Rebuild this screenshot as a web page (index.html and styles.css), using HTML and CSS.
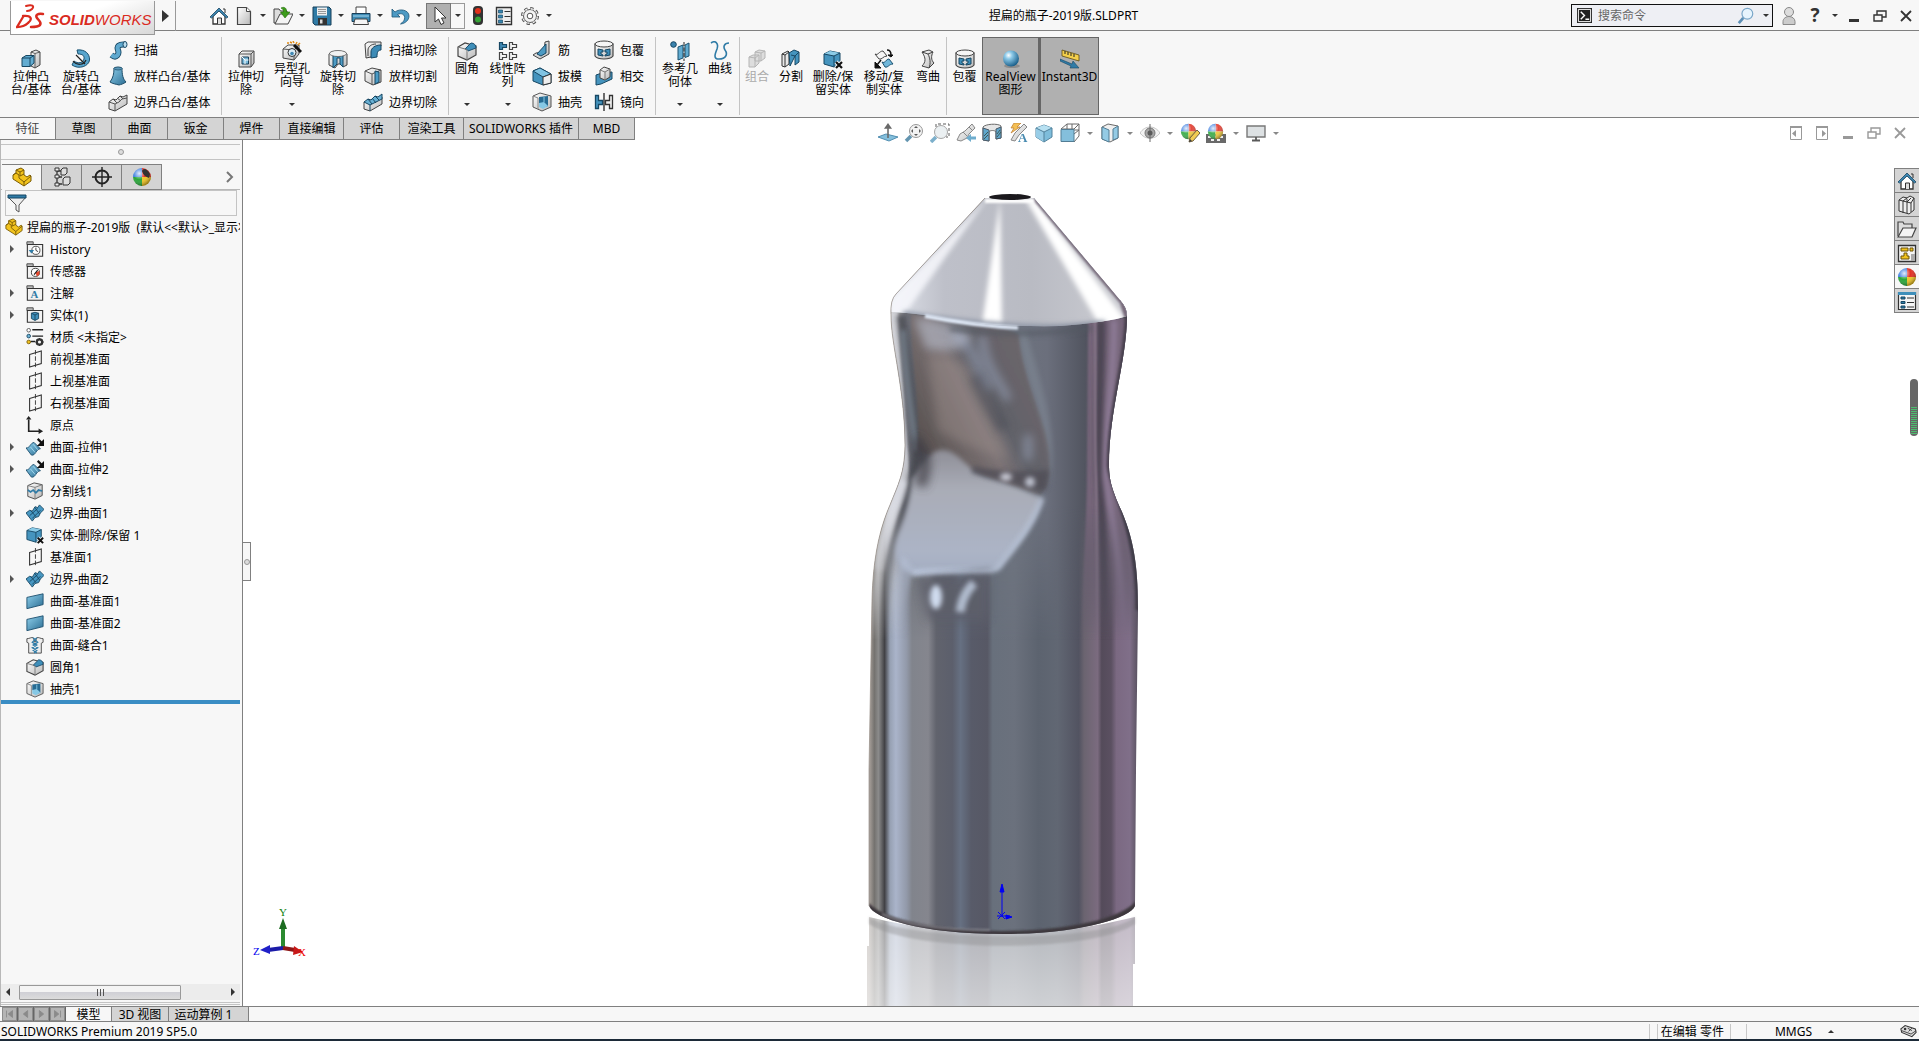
FILE: index.html
```html
<!DOCTYPE html>
<html lang="zh-CN">
<head>
<meta charset="utf-8">
<title>捏扁的瓶子-2019版.SLDPRT</title>
<link rel="stylesheet" href="styles.css">
</head>
<body>
<svg class="sprite" aria-hidden="true">
  <defs>
    <linearGradient id="gb" x1="0" y1="0" x2="1" y2="1"><stop offset="0" stop-color="#8fd0ec"/><stop offset="1" stop-color="#2b6d93"/></linearGradient>
    <linearGradient id="gg" x1="0" y1="0" x2="1" y2="1"><stop offset="0" stop-color="#ffffff"/><stop offset="1" stop-color="#b8b8b8"/></linearGradient>
    <radialGradient id="gs" cx=".35" cy=".3" r=".75"><stop offset="0" stop-color="#fff"/><stop offset=".3" stop-color="#8cc9e8"/><stop offset="1" stop-color="#145a86"/></radialGradient>
    <radialGradient id="gw" cx=".35" cy=".3" r=".7"><stop offset="0" stop-color="#fff" stop-opacity=".85"/><stop offset=".5" stop-color="#fff" stop-opacity="0"/><stop offset="1" stop-color="#000" stop-opacity=".35"/></radialGradient>
  </defs>
  <symbol id="home" viewBox="0 0 20 20"><path d="M4 10v8h12v-8L10 4z" fill="#fff" stroke="#333" stroke-width="1.3"/><path d="M8.500 18v-6h4v6" fill="#ddd" stroke="#333"/><path d="M14 3h2v4" stroke="#333" fill="none"/><path d="M1 11l9-9 9 9-1.500 1L10 5l-7.500 7z" fill="#3f88b3" stroke="#174460" stroke-width=".8"/></symbol>
  <symbol id="new" viewBox="0 0 20 20"><path d="M3.500 1.500h9l4 4v13h-13z" fill="url(#gg)" stroke="#444" stroke-width="1.200"/><path d="M12.500 1.500v4h4" fill="#fff" stroke="#444"/></symbol>
  <symbol id="open" viewBox="0 0 20 20"><path d="M1 17V3h5l1.500 2H14v12z" fill="#ddd" stroke="#444"/><path d="M2 18l5-10h13l-5 10z" fill="#f4f4f4" stroke="#444"/><path d="M8 2c4-2 6 1 5.500 4H17l-5 6-4.500-6h3C10.500 4 10 3 8 2z" fill="#3d9c1b" stroke="#246c0c" stroke-width=".6"/></symbol>
  <symbol id="save" viewBox="0 0 20 20"><path d="M1 1h16l2 2v16H3l-2-2z" fill="#2f7ba6" stroke="#173f59"/><path d="M5 1.500h10v8H5z" fill="#eee"/><path d="M6 3.500h8M6 5.500h8M6 7.500h8" stroke="#999"/><path d="M6 12h9v7H6z" fill="#333"/><path d="M8 13.500h2.500v4H8z" fill="#ddd"/></symbol>
  <symbol id="print" viewBox="0 0 20 20"><path d="M5 8V1h10v7" fill="#fff" stroke="#444"/><path d="M1 7.500h18v8H1z" fill="#3d8ab4" stroke="#183f59"/><path d="M2 10h16" stroke="#a8d8ee"/><path d="M4 13h12l1.500 5.500h-15z" fill="#f5f5f5" stroke="#444"/></symbol>
  <symbol id="undo" viewBox="0 0 20 20"><path d="M2 3v8h8L7.500 8.500c4-2 8 0 7 4.500-.5 2-2 3.500-4 5 5-.5 8.500-4 8.500-8C19 4 10 2 5 6z" fill="#4d9ac4" stroke="#1d5577" stroke-width=".8"/></symbol>
  <symbol id="cursor" viewBox="0 0 20 20"><path d="M6 1v15l3.500-3 2.500 5.500 3-1.500-2.500-5H17z" fill="#fff" stroke="#333"/></symbol>
  <symbol id="traffic" viewBox="0 0 20 20"><rect x="5" y="0" width="10" height="19" rx="4" fill="#333"/><circle cx="10" cy="5" r="3" fill="#e2301b"/><circle cx="10" cy="13.500" r="3" fill="#35a336"/></symbol>
  <symbol id="options" viewBox="0 0 20 20"><path d="M2.500 1.500h15v17h-15z" fill="#eee" stroke="#333" stroke-width="1.400"/><path d="M4.500 4h4v3h-4zM4.500 9h4v3h-4zM4.500 14h4v3h-4z" fill="#3986b0" stroke="#1b4d6b" stroke-width=".7"/><path d="M10.500 5.500h6M10.500 10.500h6M10.500 15.500h6" stroke="#333" stroke-width="1.200"/></symbol>
  <symbol id="gear" viewBox="0 0 20 20"><g fill="none"><circle cx="10" cy="10" r="7.500" stroke="#555" stroke-width="3" stroke-dasharray="3.200 2.690"/><circle cx="10" cy="10" r="6.500" fill="#f3f3f3" stroke="#555"/><circle cx="10" cy="10" r="7.300" stroke="#f3f3f3" stroke-width="1.400" stroke-dasharray="2.200 3.530" stroke-dashoffset="-.5"/></g><circle cx="10" cy="10" r="2.800" fill="#fff" stroke="#555"/></symbol>
  <symbol id="extrude" viewBox="0 0 20 20"><path d="M10 3l5-2 4 2v13l-5 3-4-2z" fill="url(#gg)" stroke="#444"/><path d="M14 4.500v14M10 3l4 1.500L19 3" fill="none" stroke="#444" stroke-width=".8"/><path d="M1 9l4-2.500h8V14l-4 3.500H1z" fill="#62acd1" stroke="#174763"/><path d="M1 9h8v8.500M9 9l4-2.500" fill="none" stroke="#174763"/></symbol>
  <symbol id="revolve" viewBox="0 0 20 20"><path d="M6 1c8-1 13 4 12.500 10C18 17 8 21 1 16l2-4c4 3 9 2 10-2 .5-3-1-5-6-5z" fill="#58a5cd" stroke="#1b516f"/><path d="M5 6l9 9M2 12c4 5 11 4 13-1" stroke="#222" fill="none" stroke-width="1.200"/></symbol>
  <symbol id="sweep" viewBox="0 0 20 20"><path d="M3.500 15c5 4 8-1 6.500-5S11 4 17 4.500" fill="none" stroke="#174763" stroke-width="6"/><path d="M3.500 15c5 4 8-1 6.500-5S11 4 17 4.500" fill="none" stroke="#5fa9cf" stroke-width="4.200"/><ellipse cx="17" cy="4.500" rx="2" ry="3" fill="#b9def0" stroke="#174763"/></symbol>
  <symbol id="loft" viewBox="0 0 20 20"><path d="M6 2c2-1 6-1 8 0 0 7 1 11 4 14-3 2-5 2.500-7 3-3-1-6-1-9-3 3-4 4-8 4-14z" fill="url(#gb)" stroke="#1e4d69"/><ellipse cx="10" cy="2.500" rx="4" ry="1.500" fill="#5d98b8" stroke="#1e4d69" stroke-width=".7"/></symbol>
  <symbol id="boundary" viewBox="0 0 20 20"><path d="M1 10l4-3 3 1 4-4 3 1 4-2v9l-12 7-6-2z" fill="url(#gg)" stroke="#444"/><path d="M1 10l6 2 4-2 3-3 5-1M7 12v7M5 7l4 4M9 6l4 3M12 4l3 3" fill="none" stroke="#555"/></symbol>
  <symbol id="boundaryb" viewBox="0 0 20 20"><path d="M1 10v7l6 2 12-7V5z" fill="url(#gg)" stroke="#444"/><path d="M1 10l4-3 3 1 4-4 3 1 4-3v5L7 13z" fill="#67b0d4" stroke="#174763"/><path d="M7 13v6M5 7l4 5M9 6l4 5M12 4l4 4" fill="none" stroke="#174763"/></symbol>
  <symbol id="cut" viewBox="0 0 20 20"><path d="M3 5l3-3h12v12l-3 4H3z" fill="url(#gg)" stroke="#444"/><path d="M3 5h12v13M15 5l3-3" fill="none" stroke="#555"/><path d="M6 8h6.500v7H6z" fill="#78b9da" stroke="#183f59"/><path d="M6 8l3 3v4M9 11h3.500" fill="none" stroke="#fff"/></symbol>
  <symbol id="wizard" viewBox="0 0 20 20"><path d="M1 8l5-4h11v9l-5 6-11-2z" fill="url(#gg)" stroke="#444"/><path d="M1 8l11 1v10M12 9l5-5" fill="none" stroke="#555"/><circle cx="10" cy="11.500" r="4" fill="#dcecf5" stroke="#333"/><circle cx="10" cy="12.500" r="1.800" fill="#3f88b3"/><path d="M12 4l7 7" stroke="#111" stroke-width="3"/><path d="M5 2h2M8 1l2 1M11 0l1 2M15 1l-1 2M18 2l-2 2" stroke="#e08b17" stroke-width="1.500"/></symbol>
  <symbol id="revcut" viewBox="0 0 20 20"><path d="M1 5c2-4 16-4 18 0v11l-4 2-3-3-2 0-3 4-6-3z" fill="url(#gg)" stroke="#444"/><path d="M5 6l5 2 5-2v12l-3-3V9h-3v6l-4 4z" fill="#4e9cc5" stroke="#174763"/><ellipse cx="10" cy="4.500" rx="8.500" ry="3" fill="#f2f2f2" stroke="#555" stroke-width=".7"/></symbol>
  <symbol id="sweepcut" viewBox="0 0 20 20"><path d="M2 4l3-2h13v4L8 17l-5 1z" fill="url(#gg)" stroke="#444"/><path d="M8 18V12c0-4 4-7 10-7v5c-3 0-4 2-4 7z" fill="#3d8bb6" stroke="#174763"/><path d="M5 16V10c0-3 3-6 8-6" fill="none" stroke="#444"/></symbol>
  <symbol id="loftcut" viewBox="0 0 20 20"><path d="M2 5l7-3 9 2v12l-8 3-8-4z" fill="url(#gg)" stroke="#444"/><path d="M2 5l7 3v11M9 8l9-4" fill="none" stroke="#555"/><path d="M12 5l4 1v10l-4 2z" fill="#4b9bc5" stroke="#174763"/></symbol>
  <symbol id="fillet" viewBox="0 0 20 20"><path d="M1 6l7-4 11 3v9l-9 5-9-4z" fill="url(#gg)" stroke="#444" stroke-width="1.200"/><path d="M8 8l6-6c3 0 5 2 5 5l-8 3c0-1-1-2-3-2z" fill="#3f8fba" stroke="#1d4f6e"/><path d="M1 6l7 2c2 0 2 2 2 4v7" fill="none" stroke="#777"/></symbol>
  <symbol id="pattern" viewBox="0 0 20 20"><g stroke-width="1.200"><path d="M1.500 1.500h3v2h4v3h-4v2h-3z" fill="#3f88b3" stroke="#174763"/><path d="M11.500 1.500h3v2h4v3h-4v2h-3zM1.500 11.500h3v2h4v3h-4v2h-3zM11.500 11.500h3v2h4v3h-4v2h-3z" fill="#f4f4f4" stroke="#444"/></g></symbol>
  <symbol id="rib" viewBox="0 0 20 20"><path d="M13 2l4-1v13l-9 5-7-4 3-2 8-1z" fill="url(#gg)" stroke="#444"/><path d="M5 14l9-10v9l-5 3z" fill="#4c9ac3" stroke="#174763"/></symbol>
  <symbol id="draft" viewBox="0 0 20 20"><path d="M1 5l7-3 11 6v9l-8 2-10-4z" fill="#4594be" stroke="#174763"/><path d="M1 5l10 6 8-3-11-6z" fill="#80c3e2" stroke="#174763"/><path d="M11 11l8-3v9l-8 2z" fill="#eee" stroke="#333"/></symbol>
  <symbol id="shell" viewBox="0 0 20 20"><path d="M1 4l7-3 11 3v11l-9 4-9-4z" fill="url(#gg)" stroke="#555"/><path d="M7 5l9-1v10l-2 1-7-4z" fill="#276b92"/><path d="M7 11l5-1 4 4-5 3-4-2z" fill="#86c8e5"/><path d="M12 5v5" stroke="#86c8e5"/><path d="M1 4l5 2v11" fill="none" stroke="#888"/></symbol>
  <symbol id="wrap" viewBox="0 0 20 20"><path d="M1 4v12c3 4 15 4 18 0V4z" fill="url(#gg)" stroke="#444" stroke-width="1.200"/><ellipse cx="10" cy="4" rx="9" ry="3" fill="#f6f6f6" stroke="#444"/><path d="M4 9l5 1v2H7v2l2 1v1l-5-1zM16 9l-5 1v2h2v2l-2 1v1l5-1z" fill="#3f8fba" stroke="#174763"/></symbol>
  <symbol id="intersect" viewBox="0 0 20 20"><path d="M2 9l6-2 10-1v7l-11 5-5 1z" fill="#4594be" stroke="#174763"/><path d="M6 4l4-3 6 2v8l-5 3-5-2z" fill="url(#gg)" stroke="#444"/><path d="M6 4l5 2v8M11 6l5-3" fill="none" stroke="#777"/></symbol>
  <symbol id="mirror" viewBox="0 0 20 20"><path d="M1.500 3.500h3v5h4v4h-4v4h-3z" fill="#4594be" stroke="#174763" stroke-width="1.300"/><path d="M18.500 3.500h-3v5h-4v4h4v4h3z" fill="#eee" stroke="#333" stroke-width="1.300"/><path d="M10 1v18" stroke="#222" stroke-width="1.300"/></symbol>
  <symbol id="refgeo" viewBox="0 0 20 20"><circle cx="3.500" cy="3.500" r="2.800" fill="#3a82ad" stroke="#174763"/><path d="M8 6l5-2v13l-5 2zM15 4l4-2v13l-4 1.500z" fill="#62acd1" stroke="#1b516f"/><path d="M14 1v19" stroke="#222" stroke-dasharray="4 1.500"/></symbol>
  <symbol id="curve" viewBox="0 0 20 20"><path d="M1 2c4-3 8 0 6 6-2 5-4 10 2 10 7 0 9-5 6-9-2-3-1-7 4-7" fill="none" stroke="#2f7ba6" stroke-width="1.600"/></symbol>
  <symbol id="combine" viewBox="0 0 20 20"><path d="M8 3l4-2 6 1v7l-4 3H8zM2 8l4-2h6v8l-4 4H2z" fill="#ddd" stroke="#b5b5b5"/><path d="M2 8l6 1v9M8 9l4-3M8 3l6 1v8M14 4l4-2" fill="none" stroke="#b5b5b5"/></symbol>
  <symbol id="split" viewBox="0 0 20 20"><path d="M1 5l6-3 1 1v12l-4 3-3-1zM4 6v12M1 5l3 1 4-3" fill="#e8e8e8" stroke="#333"/><path d="M8 4l5-3 5 2v10l-4 3V7L9 17z" fill="#4594be" stroke="#174763"/><path d="M10 6l4 1 4-4" fill="none" stroke="#174763"/></symbol>
  <symbol id="delbody" viewBox="0 0 20 20"><path d="M1 5l6-3 10 2v11l-6 3-10-3z" fill="#4594be" stroke="#174763"/><path d="M1 5l6-3 10 2-6 3z" fill="#8bcbe7"/><path d="M11 7v11M1 5l10 2 6-3" fill="none" stroke="#174763"/><path d="M13 13l6 6M19 13l-6 6" stroke="#f7f7f7" stroke-width="4"/><path d="M13 13l6 6M19 13l-6 6" stroke="#111" stroke-width="2.200"/></symbol>
  <symbol id="move" viewBox="0 0 20 20"><path d="M1 5c3 2 4-3 8-3l4 5c-4 0-5 4-8 3z" fill="#f5f5f5" stroke="#444"/><path d="M8 13c3 2 4-3 7-3l4 5c-4 0-5 4-8 3z" fill="#6fb6d9" stroke="#1b516f"/><path d="M13 1c3 0 4 2 4 5" fill="none" stroke="#111" stroke-width="1.500"/><path d="M14 6h5l-2 2zM1 13v6h6z" fill="#111" stroke="#111"/><path d="M7 11l-4 5" stroke="#111" stroke-width="1.500"/></symbol>
  <symbol id="flex" viewBox="0 0 20 20"><path d="M4 3l7-2 4 2c-2 4-2 8 1 11l-5 5-7-2c4-4 4-8 0-14z" fill="url(#gg)" stroke="#444"/><path d="M4 3l6 2c2 4 3 9 1 14M10 5l5-2" fill="none" stroke="#444"/></symbol>
  <symbol id="realview" viewBox="0 0 20 20"><ellipse cx="11" cy="17" rx="8" ry="2" fill="#8c8c8c"/><circle cx="10" cy="9.500" r="8" fill="url(#gs)"/></symbol>
  <symbol id="instant" viewBox="0 0 20 20"><path d="M2 1l17 5v6L2 7z" fill="#f3cf4b" stroke="#5a4a12" stroke-width=".8"/><path d="M5 2v3M8 3v3M11 4v3M14 5v3" stroke="#222"/><path d="M0 10l12 5 1-3 6 7-9 0 1-2L0 12z" fill="#2f7ba6" stroke="#174763" stroke-width=".6"/></symbol>
  <symbol id="normal" viewBox="0 0 20 20"><path d="M0 14l8-3 12 3-9 4z" fill="#74b7d8" stroke="#3a7fa6"/><path d="M10 15V3M7.500 5L10 1.500 12.500 5z" stroke="#555" stroke-width="1.600" fill="#555"/></symbol>
  <symbol id="zoomfit" viewBox="0 0 20 20"><path d="M2 18l5-5" stroke="#4f87a6" stroke-width="3.500"/><circle cx="12" cy="8" r="6.500" fill="#f2f2f2" stroke="#888"/><path d="M12 3l2 2h-4zM12 13l2-2h-4zM7 8l2-2v4zM17 8l-2-2v4z" fill="#444"/></symbol>
  <symbol id="zoomarea" viewBox="0 0 20 20"><path d="M6 4V1h13v13h-3" fill="none" stroke="#444" stroke-dasharray="3 2"/><path d="M1 19l5-5" stroke="#6aa5c4" stroke-width="3.500"/><circle cx="11" cy="9" r="6.500" fill="#e9eef1" stroke="#999"/></symbol>
  <symbol id="prev" viewBox="0 0 20 20"><path d="M1 17l3-6 5-3 7-7 3 4-6 6-2 4-6 3z" fill="url(#gg)" stroke="#777"/><path d="M7 9l4 4M13 4l3 3" stroke="#777"/><path d="M10 15l5-4v2.500h5v3h-5V19z" fill="#5ba2c8"/></symbol>
  <symbol id="section" viewBox="0 0 20 20"><path d="M1 4c2-3 15-4 18-1v12l-5 1V9c-1-2-6-2-7 0v9l-6-1z" fill="#e3e3e3" stroke="#555"/><path d="M1 5l6 2v11l-6-1zM14 6l5-2v11l-5 1z" fill="#4b9bc5" stroke="#345"/><path d="M2 13l4-4M2 16l4-4M15 11l3-4M15 14l4-5" stroke="#244"/></symbol>
  <symbol id="dynview" viewBox="0 0 20 20"><path d="M3 17l4-7 9-9 3 3-8 8-4 6z" fill="url(#gg)" stroke="#777"/><path d="M6 0h7L9 4h3L3 10l3-5H3z" fill="#f3b73d" stroke="#b26a15" stroke-width=".7"/></symbol>
  <symbol id="cube" viewBox="0 0 20 20"><path d="M2 5l8-3 8 3v9l-8 5-8-5z" fill="#6db4d7" stroke="#3b718e"/><path d="M2 5l8 4v10l-8-5z" fill="#8ac7e4"/><path d="M2 5l8-3 8 3-8 4z" fill="#aedcf0"/><path d="M2 5l8 4 8-4M10 9v10" fill="none" stroke="#3b718e"/></symbol>
  <symbol id="orient" viewBox="0 0 20 20"><path d="M1 6l6-5h12v12l-5 6M7 1v8M12 1v8M1 6h13M14 6l5-5M19 7h-9M14 11l5-4" fill="none" stroke="#555"/><path d="M1 6.500h13v12H1z" fill="#74b7d8" stroke="#3b6c87"/></symbol>
  <symbol id="display" viewBox="0 0 20 20"><path d="M2 4l6-3 10 2v12l-8 4-8-3z" fill="#eee" stroke="#555"/><path d="M2 4l7 3v12l-7-3z" fill="#86c4e2" stroke="#3b6c87"/><path d="M13 6l5-3v12l-5 2z" fill="#86c4e2" stroke="#3b6c87"/></symbol>
  <symbol id="eye" viewBox="0 0 20 20"><path d="M0 10c5-8 15-8 20 0-5 7-15 7-20 0z" fill="#f2f2f2" stroke="#bbb"/><circle cx="10" cy="10" r="5" fill="#999" stroke="#666"/><path d="M10 1v18" stroke="#555"/><circle cx="10" cy="10" r="2.500" fill="#444"/></symbol>
  <symbol id="ball" viewBox="0 0 20 20"><path d="M10 10V1a9 9 0 0 1 9 9z" fill="#e23124"/><path d="M10 10H1a9 9 0 0 1 9-9z" fill="#3c7de0"/><path d="M10 10v9a9 9 0 0 1-9-9z" fill="#2aa63a"/><path d="M10 10h9a9 9 0 0 1-9 9z" fill="#f0c526"/><circle cx="10" cy="10" r="9" fill="url(#gw)"/></symbol>
  <symbol id="ballpen" viewBox="0 0 20 20"><use href="#ball" width="17" height="17"/><path d="M9 19l1-4 7-8 3 3-7 8z" fill="#f0c43c" stroke="#5b4a2a"/><path d="M9 19l1-3 2 2z" fill="#222"/></symbol>
  <symbol id="scene" viewBox="0 0 20 20"><path d="M0 11h20v9H0z" fill="#555"/><path d="M2 13h3v2H2zM8 13h3v2H8zM14 13h3v2h-3zM5 16h3v2H5zM11 16h3v2h-3z" fill="#eee"/><use href="#ball" x="1" width="17" height="17"/></symbol>
  <symbol id="monitor" viewBox="0 0 20 20"><path d="M1 3h18v11H1z" fill="#d9dde0" stroke="#666" stroke-width="1.400"/><path d="M10 14v3M6 17.500h8" stroke="#444" stroke-width="1.800"/></symbol>
  <symbol id="part" viewBox="0 0 20 20"><path d="M1 8l3-2V3l5-2 3 2v5l3 2 3-2 1 1v5l-7 5L1 12z" fill="#f2c31d" stroke="#7b5c06"/><path d="M1 8l3-2 3 2v3l5 4 7-6M12 15v4M4 3l4 2v4l4-2M8 5l4-2" fill="none" stroke="#7b5c06"/></symbol>
  <symbol id="config" viewBox="0 0 20 20"><path d="M5 2v17M5 4h4M5 10h5M5 17h5" stroke="#333" stroke-width="1.300" fill="none"/><path d="M3 1h4v3H3zM3 8h4v3H3zM3 16h4v3H3z" fill="#eee" stroke="#333"/><path d="M9 3l2-2h4v5l-2 2H9zM11 12l2-2h5v6l-2 2h-5z" fill="#ddd" stroke="#333"/></symbol>
  <symbol id="target" viewBox="0 0 20 20"><circle cx="10" cy="10" r="6.500" fill="none" stroke="#222" stroke-width="2"/><path d="M10 0v20M0 10h20" stroke="#222" stroke-width="1.400"/></symbol>
  <symbol id="appear" viewBox="0 0 20 20"><use href="#ball" width="20" height="20"/><path d="M10 4c1-3 5-3 8 3l-1 4c-3-1-6-3-7-7z" fill="#333"/></symbol>
  <symbol id="filter" viewBox="0 0 20 20"><path d="M1 4h18l-7 8v7l-3-2v-5z" fill="#eee" stroke="#555"/><path d="M1 2h18v3H1z" fill="#2f7ba6" stroke="#174763"/></symbol>
  <symbol id="folder" viewBox="0 0 20 20"><path d="M1 5V2h7v3" fill="#bbb" stroke="#444"/><path d="M1.500 5h17v13h-17z" fill="#f2f2f2" stroke="#333" stroke-width="1.200"/></symbol>
  <symbol id="history" viewBox="0 0 20 20"><use href="#folder" width="20" height="20"/><circle cx="11" cy="11.500" r="4.500" fill="#fff" stroke="#444"/><path d="M11 8.500v3l2.500 1.500" fill="none" stroke="#333"/><path d="M3 11h6l-3 4z" fill="#2f7ba6"/></symbol>
  <symbol id="sensor" viewBox="0 0 20 20"><use href="#folder" width="20" height="20"/><circle cx="10.500" cy="11.500" r="4.500" fill="#fff" stroke="#333"/><path d="M10.500 11.500L15 10v4l-3 2z" fill="#e2462c"/><path d="M9 14l4-5" stroke="#222" stroke-width="1.300"/></symbol>
  <symbol id="solid" viewBox="0 0 20 20"><use href="#folder" width="20" height="20"/><path d="M6 8l4-1 4 1v6l-4 2-4-2z" fill="#3f8fba" stroke="#174763"/><path d="M6 8l4 2 4-2M10 10v6" fill="none" stroke="#174763"/></symbol>
  <symbol id="material" viewBox="0 0 20 20"><path d="M7 2h12M7 9h12M5 15h5" stroke="#222" stroke-width="1.600"/><circle cx="3" cy="2.500" r="2" fill="#fff" stroke="#555"/><circle cx="3" cy="9" r="2" fill="#6fb6d9" stroke="#174763"/><circle cx="3" cy="15.500" r="2" fill="#f2c31d" stroke="#7b5c06"/><circle cx="15" cy="15.500" r="3" fill="none" stroke="#333" stroke-width="2.500"/><path d="M15 11v2M15 18v2M10.500 15.500h2M17.500 15.500h2M12 12.500l1 1M18 12.500l-1 1M12 18.500l1-1M18 18.500l-1-1" stroke="#333" stroke-width="1.500"/></symbol>
  <symbol id="plane" viewBox="0 0 20 20"><path d="M4 5l13-4v14L4 19z" fill="none" stroke="#333" stroke-width="1.200"/><path d="M10.500 0v20" stroke="#333" stroke-dasharray="5 2"/></symbol>
  <symbol id="origin" viewBox="0 0 20 20"><path d="M3 4v13h12" fill="none" stroke="#222" stroke-width="1.800"/><path d="M0 4l3-4 3 4zM14 14l5 3-5 3z" fill="#222"/></symbol>
  <symbol id="surfex" viewBox="0 0 20 20"><path d="M0 11c4 1 5-6 9-6l7 7c-5 0-5 8-10 7z" fill="url(#gb)" stroke="#1d4f6e"/><path d="M5 10l5 6M8 7l5 6" stroke="#a8dcf2"/><path d="M13 1l4 4" stroke="#111" stroke-width="2.500"/><path d="M20 1v8h-8z" fill="#111"/></symbol>
  <symbol id="splitline" viewBox="0 0 20 20"><path d="M2 4l7-3 9 2v12l-8 4-8-3z" fill="url(#gg)" stroke="#444"/><path d="M2 4l8 2 8-3M10 6v13" fill="none" stroke="#777"/><path d="M2 9l3 2 3-2 3 3 3-3 4 1" fill="none" stroke="#2f7ba6" stroke-width="2"/></symbol>
  <symbol id="bsurf" viewBox="0 0 20 20"><path d="M0 10l4-3 3 1 3-5 3 1 2-3 5 5-4 4-2 4-4 1-3 4z" fill="#4797c2" stroke="#174763"/><path d="M5 7l6 7M10 4l5 7M4 13l9-8M7 16l9-9" stroke="#174763"/></symbol>
  <symbol id="psurf" viewBox="0 0 20 20"><path d="M1 6l18-4v12L1 18.500z" fill="url(#gb)" stroke="#1d4f6e"/></symbol>
  <symbol id="knit" viewBox="0 0 20 20"><path d="M1 3c3 0 5-2 7-1l2 5 2-5c2-1 4 1 7 1v4l-2 1v11H3V8L1 7z" fill="#eee" stroke="#444"/><path d="M8 2l5 5-5 3 5 3-5 3 4 3M12 2L7 7l5 3-5 3 5 3-3 3" fill="none" stroke="#2f7ba6" stroke-width="1.400"/></symbol>
  <symbol id="books" viewBox="0 0 20 20"><path d="M2 5l4-3 4 1 3-2 4 2v12l-5 4-10-3z" fill="#eee" stroke="#333"/><path d="M2 5l4 1v12M6 6l4-3M10 4v14M6 6l4 1 4-4M10 7l4 1 3-5M14 8v9" fill="none" stroke="#333"/></symbol>
  <symbol id="folder2" viewBox="0 0 20 20"><path d="M1 17V3h5l1 2h8v4" fill="#ddd" stroke="#444" stroke-width="1.200"/><path d="M1 18L6 9h13l-4 9z" fill="#f4f4f4" stroke="#444" stroke-width="1.200"/></symbol>
  <symbol id="palette" viewBox="0 0 20 20"><path d="M1.500 2.500h17v16h-17z" fill="#f5f5f5" stroke="#333" stroke-width="1.300"/><path d="M4 5h7v3H4zM13 5h3v3h-3zM7 10h3v3h2v3H4v-3h3z" fill="#f2c31d" stroke="#6b5208"/><path d="M14 11h4v7h-4z" fill="#aaa"/></symbol>
  <symbol id="props" viewBox="0 0 20 20"><path d="M1.500 1.500h17v17h-17z" fill="#f5f5f5" stroke="#333" stroke-width="1.200"/><path d="M1 1h18v3H1z" fill="#3f8fba"/><path d="M4 6h4v2H4zM4 10.500h4v2H4zM4 15h4v2H4z" fill="#2f7ba6" stroke="#174763"/><path d="M10 7h7M10 11.500h7M10 16h7" stroke="#333"/></symbol>
  <symbol id="lens" viewBox="0 0 20 20"><path d="M2 18l5-6" stroke="#5d8fb5" stroke-width="3"/><circle cx="11.500" cy="7.500" r="6" fill="#e7f4fd" stroke="#79a6c8" stroke-width="1.300"/></symbol>
  <symbol id="user" viewBox="0 0 20 20"><path d="M4 18.500v-3c0-3 3-5 6-5s6 2 6 5v3z" fill="#ccc" stroke="#888"/><circle cx="10" cy="6" r="4.500" fill="#ddd" stroke="#888"/></symbol>
  <symbol id="min" viewBox="0 0 20 20"><path d="M5 13h10v3H5z" fill="currentColor"/></symbol>
  <symbol id="restore" viewBox="0 0 20 20"><path d="M4 9h8v6H4zM7 9V5h9v6h-4" fill="none" stroke="currentColor" stroke-width="1.400"/></symbol>
  <symbol id="close" viewBox="0 0 20 20"><path d="M5 5l10 10M15 5L5 15" stroke="currentColor" stroke-width="1.800"/></symbol>
  <symbol id="paneL" viewBox="0 0 20 20"><path d="M4.500 3.500h11v13h-11z" fill="none" stroke="currentColor"/><path d="M4 3h12v2H4zM10 7v7l-4-3.500z" fill="currentColor"/></symbol>
  <symbol id="paneR" viewBox="0 0 20 20"><path d="M4.500 3.500h11v13h-11z" fill="none" stroke="currentColor"/><path d="M4 3h12v2H4zM10 7v7l4-3.500z" fill="currentColor"/></symbol>
  <symbol id="tag" viewBox="0 0 20 20"><path d="M1 7l5-4 12 4 1 4-5 5L2 11z" fill="#ddd" stroke="#333" stroke-width="1.200"/><path d="M2 9l11 4 6-4" fill="none" stroke="#333"/><circle cx="6" cy="7" r="1.500" fill="#333"/><path d="M9 6l5 3M14 6l-4 4" stroke="#333"/></symbol>
</svg>

<header class="titlebar">
  <div class="brand">
    <svg class="brand-mark" viewBox="0 0 30 30" aria-hidden="true"><g fill="none" stroke="#da2b1f" stroke-linecap="round"><path d="M10 3c6-2 9 0 6 3-1 1-3 2-5 2" stroke-width="2"/><path d="M7 13c8-1 10 3 5 7-3 3-7 4-11 4L7 14" stroke-width="2.300"/><path d="M27 11c-5-1-8 1-6 4s5 4 3 7c-2 2-6 2-9 2" stroke-width="2.500"/></g></svg>
    <span class="brand-name"><b>SOLID</b>WORKS</span>
  </div>
  <button class="brand-more" aria-label="菜单"></button>
  <div class="quick">
    <button class="tool" aria-label="主页"><svg><use href="#home"/></svg></button>
    <button class="tool" aria-label="新建"><svg><use href="#new"/></svg></button><button class="drop" aria-label="新建选项"></button>
    <button class="tool" aria-label="打开"><svg><use href="#open"/></svg></button><button class="drop" aria-label="打开选项"></button>
    <button class="tool" aria-label="保存"><svg><use href="#save"/></svg></button><button class="drop" aria-label="保存选项"></button>
    <button class="tool" aria-label="打印"><svg><use href="#print"/></svg></button><button class="drop" aria-label="打印选项"></button>
    <button class="tool" aria-label="撤消"><svg><use href="#undo"/></svg></button><button class="drop" aria-label="撤消选项"></button>
    <button class="tool picked" aria-label="选择"><svg><use href="#cursor"/></svg></button><button class="drop framed" aria-label="选择选项"></button>
    <button class="tool wide" aria-label="重建模型"><svg><use href="#traffic"/></svg></button>
    <button class="tool wide" aria-label="文件属性"><svg><use href="#options"/></svg></button>
    <button class="tool" aria-label="选项"><svg><use href="#gear"/></svg></button><button class="drop" aria-label="更多选项"></button>
  </div>
  <h1 class="doc-title">捏扁的瓶子-2019版.SLDPRT</h1>
  <form class="search">
    <svg viewBox="0 0 16 16" aria-hidden="true"><path d="M0 0h16v16H0z" fill="#222"/><path d="M1.500 1.500h13v13h-13z" fill="none" stroke="#fff"/><path d="M4 4l4 4-4 4M9 12h4" fill="none" stroke="#fff" stroke-width="1.500"/></svg>
    <input type="text" aria-label="搜索命令" placeholder="搜索命令">
    <button type="button" class="tool" aria-label="搜索"><svg><use href="#lens"/></svg></button>
    <button type="button" class="drop" aria-label="搜索选项"></button>
  </form>
  <div class="window-tools">
    <button class="tool" aria-label="登录"><svg><use href="#user"/></svg></button>
    <button class="tool help" aria-label="帮助">?</button>
    <button class="drop" aria-label="帮助选项"></button>
    <button class="tool" aria-label="最小化"><svg><use href="#min"/></svg></button>
    <button class="tool" aria-label="还原"><svg><use href="#restore"/></svg></button>
    <button class="tool" aria-label="关闭"><svg><use href="#close"/></svg></button>
  </div>
</header>

<section class="ribbon" aria-label="特征">
  <div class="group g-boss">
    <button class="big"><svg><use href="#extrude"/></svg><span>拉伸凸<br>台/基体</span></button>
    <button class="big"><svg><use href="#revolve"/></svg><span>旋转凸<br>台/基体</span></button>
    <div class="stack">
      <button class="small"><svg><use href="#sweep"/></svg>扫描</button>
      <button class="small"><svg><use href="#loft"/></svg>放样凸台/基体</button>
      <button class="small"><svg><use href="#boundary"/></svg>边界凸台/基体</button>
    </div>
  </div>
  <div class="group g-cut">
    <button class="big"><svg><use href="#cut"/></svg><span>拉伸切<br>除</span></button>
    <button class="big has-drop"><svg><use href="#wizard"/></svg><span>异型孔<br>向导</span></button>
    <button class="big"><svg><use href="#revcut"/></svg><span>旋转切<br>除</span></button>
    <div class="stack">
      <button class="small"><svg><use href="#sweepcut"/></svg>扫描切除</button>
      <button class="small"><svg><use href="#loftcut"/></svg>放样切割</button>
      <button class="small"><svg><use href="#boundaryb"/></svg>边界切除</button>
    </div>
  </div>
  <div class="group g-feat">
    <button class="big has-drop"><svg><use href="#fillet"/></svg><span>圆角</span></button>
    <button class="big has-drop"><svg><use href="#pattern"/></svg><span>线性阵<br>列</span></button>
    <div class="stack">
      <button class="small"><svg><use href="#rib"/></svg>筋</button>
      <button class="small"><svg><use href="#draft"/></svg>拔模</button>
      <button class="small"><svg><use href="#shell"/></svg>抽壳</button>
    </div>
    <div class="stack">
      <button class="small"><svg><use href="#wrap"/></svg>包覆</button>
      <button class="small"><svg><use href="#intersect"/></svg>相交</button>
      <button class="small"><svg><use href="#mirror"/></svg>镜向</button>
    </div>
  </div>
  <div class="group g-ref">
    <button class="big has-drop"><svg><use href="#refgeo"/></svg><span>参考几<br>何体</span></button>
    <button class="big has-drop"><svg><use href="#curve"/></svg><span>曲线</span></button>
  </div>
  <div class="group g-body">
    <button class="big" disabled><svg><use href="#combine"/></svg><span>组合</span></button>
    <button class="big"><svg><use href="#split"/></svg><span>分割</span></button>
    <button class="big"><svg><use href="#delbody"/></svg><span>删除/保<br>留实体</span></button>
    <button class="big"><svg><use href="#move"/></svg><span>移动/复<br>制实体</span></button>
    <button class="big"><svg><use href="#flex"/></svg><span>弯曲</span></button>
  </div>
  <div class="group g-view">
    <button class="big"><svg><use href="#wrap"/></svg><span>包覆</span></button>
    <button class="big on" aria-pressed="true"><svg><use href="#realview"/></svg><span>RealView<br>图形</span></button>
    <button class="big on" aria-pressed="true"><svg><use href="#instant"/></svg><span>Instant3D</span></button>
  </div>
</section>

<main class="work">
  <nav class="tabs" aria-label="命令管理器">
    <button class="active">特征</button><button>草图</button><button>曲面</button><button>钣金</button><button>焊件</button><button class="w64">直接编辑</button><button>评估</button><button class="w64">渲染工具</button><button class="w115">SOLIDWORKS 插件</button><button>MBD</button>
  </nav>

  <aside class="panel">
    <div class="grip"><i></i></div>
    <div class="panel-tabs">
      <button class="active" aria-label="特征树"><svg><use href="#part"/></svg></button>
      <button aria-label="配置"><svg><use href="#config"/></svg></button>
      <button aria-label="尺寸专家"><svg><use href="#target"/></svg></button>
      <button aria-label="外观"><svg><use href="#appear"/></svg></button>
      <button class="next" aria-label="更多"><svg viewBox="0 0 10 14"><path d="M2 2l5 5-5 5" fill="none" stroke="#777" stroke-width="2"/></svg></button>
    </div>
    <label class="filter"><svg><use href="#filter"/></svg><input type="text" aria-label="过滤"></label>
    <div class="root"><svg><use href="#part"/></svg>捏扁的瓶子-2019版&nbsp; (默认&lt;&lt;默认&gt;_显示状态 1&gt;)</div>
    <ul class="tree">
      <li class="exp"><svg><use href="#history"/></svg>History</li>
      <li><svg><use href="#sensor"/></svg>传感器</li>
      <li class="exp"><svg viewBox="0 0 20 20"><use href="#folder" width="20" height="20"/><text class="serif-a" x="5" y="16" font-size="12">A</text></svg>注解</li>
      <li class="exp"><svg><use href="#solid"/></svg>实体(1)</li>
      <li><svg><use href="#material"/></svg>材质 &lt;未指定&gt;</li>
      <li><svg><use href="#plane"/></svg>前视基准面</li>
      <li><svg><use href="#plane"/></svg>上视基准面</li>
      <li><svg><use href="#plane"/></svg>右视基准面</li>
      <li><svg><use href="#origin"/></svg>原点</li>
      <li class="exp"><svg><use href="#surfex"/></svg>曲面-拉伸1</li>
      <li class="exp"><svg><use href="#surfex"/></svg>曲面-拉伸2</li>
      <li><svg><use href="#splitline"/></svg>分割线1</li>
      <li class="exp"><svg><use href="#bsurf"/></svg>边界-曲面1</li>
      <li><svg><use href="#delbody"/></svg>实体-删除/保留 1</li>
      <li><svg><use href="#plane"/></svg>基准面1</li>
      <li class="exp"><svg><use href="#bsurf"/></svg>边界-曲面2</li>
      <li><svg><use href="#psurf"/></svg>曲面-基准面1</li>
      <li><svg><use href="#psurf"/></svg>曲面-基准面2</li>
      <li><svg><use href="#knit"/></svg>曲面-缝合1</li>
      <li><svg><use href="#fillet"/></svg>圆角1</li>
      <li><svg><use href="#shell"/></svg>抽壳1</li>
    </ul>
    <div class="rollback"></div>
    <div class="hscroll"><i class="left"></i><div class="track"><div class="thumb"><i></i><i></i><i></i></div></div><i class="right"></i></div>
    <div class="grip-low"></div>
  </aside>

  <section class="viewport" aria-label="模型视图">
    <svg class="model" viewBox="863 188 290 818" role="img" aria-label="瓶子">
      <defs>
        <linearGradient id="metal" gradientUnits="userSpaceOnUse" x1="869" y1="0" x2="1138" y2="0">
          <stop offset="0" stop-color="#aaa29c"/><stop offset=".02" stop-color="#74726f"/><stop offset=".035" stop-color="#8b8b8b"/><stop offset=".058" stop-color="#414145"/><stop offset=".078" stop-color="#96a0b2"/><stop offset=".1" stop-color="#aab4ca"/><stop offset=".14" stop-color="#9299a9"/><stop offset=".16" stop-color="#81848c"/><stop offset=".22" stop-color="#85868e"/><stop offset=".25" stop-color="#61636d"/><stop offset=".31" stop-color="#5c5f6c"/><stop offset=".34" stop-color="#667082"/><stop offset=".38" stop-color="#585b69"/><stop offset=".44" stop-color="#575865"/><stop offset=".46" stop-color="#68707c"/><stop offset=".54" stop-color="#6b717d"/><stop offset=".63" stop-color="#5c636f"/><stop offset=".7" stop-color="#616773"/><stop offset=".78" stop-color="#525361"/><stop offset=".8" stop-color="#6b6470"/><stop offset=".85" stop-color="#7b6b7f"/><stop offset=".865" stop-color="#544b5a"/><stop offset=".9" stop-color="#5b5061"/><stop offset=".92" stop-color="#7b6982"/><stop offset=".97" stop-color="#806f89"/><stop offset="1" stop-color="#57505e"/>
        </linearGradient>
        <linearGradient id="cone" gradientUnits="userSpaceOnUse" x1="900" y1="0" x2="1120" y2="0"><stop offset="0" stop-color="#d9dce4"/><stop offset=".2" stop-color="#bec0c9"/><stop offset=".6" stop-color="#b9bbc3"/><stop offset="1" stop-color="#cacbd1"/></linearGradient>
        <linearGradient id="neck" gradientUnits="userSpaceOnUse" x1="893" y1="0" x2="1130" y2="0"><stop offset="0" stop-color="#c8c7c6"/><stop offset=".05" stop-color="#75767e"/><stop offset=".12" stop-color="#575b64"/><stop offset=".5" stop-color="#6e747f"/><stop offset=".65" stop-color="#6b6f7c"/><stop offset=".82" stop-color="#50535e"/></linearGradient>
        <linearGradient id="neckfade" x1="0" y1="0" x2="0" y2="1"><stop offset="0" stop-color="#fff"/><stop offset=".6" stop-color="#fff"/><stop offset="1" stop-color="#000"/></linearGradient>
        <linearGradient id="dent" gradientUnits="userSpaceOnUse" x1="905" y1="450" x2="1045" y2="380"><stop offset="0" stop-color="#46434a"/><stop offset=".15" stop-color="#5c5554"/><stop offset=".5" stop-color="#7d7476"/><stop offset=".65" stop-color="#62636b"/><stop offset="1" stop-color="#6c666b"/></linearGradient>
        <linearGradient id="shoulder" gradientUnits="userSpaceOnUse" x1="0" y1="450" x2="0" y2="578"><stop offset="0" stop-color="#8e8e97"/><stop offset=".3" stop-color="#a9acb6"/><stop offset=".8" stop-color="#acb4c6"/><stop offset="1" stop-color="#a1abbf"/></linearGradient>
        <linearGradient id="fade" x1="0" y1="0" x2="0" y2="1"><stop offset="0" stop-color="#fff" stop-opacity=".52"/><stop offset="1" stop-color="#fff" stop-opacity=".7"/></linearGradient>
        <mask id="nm" maskUnits="userSpaceOnUse" x="863" y="300" width="290" height="340"><rect x="863" y="300" width="290" height="340" fill="url(#neckfade)"/></mask>
        <filter id="b1" filterUnits="userSpaceOnUse" x="850" y="180" width="310" height="840"><feGaussianBlur stdDeviation="1"/></filter>
        <filter id="b2" filterUnits="userSpaceOnUse" x="850" y="180" width="310" height="840"><feGaussianBlur stdDeviation="2.500"/></filter>
        <filter id="b5" filterUnits="userSpaceOnUse" x="850" y="180" width="310" height="840"><feGaussianBlur stdDeviation="5"/></filter>
        <clipPath id="body"><path d="M985 198L896 294Q890 300 891 315C891 345 905 390 905 445C905 472 898 485 890 505C879 530 873 560 872 600L869 770V906C874 918 920 934 1004 934C1080 934 1130 918 1135 906L1136 770L1138 610C1138 575 1136 545 1122 512C1112 490 1109 480 1109 465C1109 410 1127 360 1127 315Q1127 308 1120 300L1034 198Z"/></clipPath>
        <clipPath id="conec"><path d="M985 198L896 294Q889 302 891 312Q930 314 955 321Q1005 327 1060 326Q1110 322 1127 316Q1127 308 1120 300L1034 198Z"/></clipPath>
      </defs>
      <g>
        <path d="M869 917Q1004 950 1135 917V964H1133V1006H867V946H869Z" fill="url(#metal)"/>
        <path d="M865 910H1140V1006H865Z" fill="url(#fade)"/>
        <path d="M869 917C900 940 1100 945 1135 917V924C1090 954 910 952 869 924Z" fill="#8d8d8f" opacity=".4" filter="url(#b1)"/>
      </g>
      <g clip-path="url(#body)">
        <path d="M863 188h290v818H863z" fill="url(#metal)"/>
        <path d="M863 300h290v340H863z" fill="url(#neck)" mask="url(#nm)"/>
        <g mask="url(#nm)">
          <path d="M889 312C892 350 905 390 904 445C904 480 873 520 871 640L880 640C882 570 890 530 905 500C914 480 906 440 904 400C901 370 899 340 898 312Z" fill="#d6d7dd" opacity=".85" filter="url(#b1)"/>
          <path d="M901 315C906 350 914 410 917 450C915 480 902 510 893 545C887 570 884 600 884 660" fill="none" stroke="#494b52" stroke-width="9" opacity=".85" filter="url(#b2)"/>
          <path d="M903 480C896 510 884 530 878 570" fill="none" stroke="#dcdee6" stroke-width="9" opacity=".8" filter="url(#b2)"/>
        </g>
        <path d="M903 330C906 380 914 430 916 450" fill="none" stroke="#83919f" stroke-width="5" opacity=".7" filter="url(#b2)"/>
        <path d="M911 314C960 320 1010 328 1019 335C1022 370 1036 400 1045 430C1051 450 1051 475 1047 485L1040 496C1020 488 990 478 970 470C945 462 925 455 918 450C921 410 910 350 911 314Z" fill="url(#dent)" filter="url(#b1)"/>
        <path d="M914 318Q940 318 972 334Q966 356 926 349Z" fill="#abadb9" opacity=".75" filter="url(#b5)"/>
        <path d="M928 355Q965 352 990 400Q1000 440 1010 460Q960 445 938 430Z" fill="#9b8e8a" opacity=".42" filter="url(#b5)"/>
        <path d="M954 334C980 350 975 375 990 390M982 335C985 370 1000 380 1008 400M1028 435V460" fill="none" stroke="#a9b5d0" stroke-width="8" opacity=".5" filter="url(#b5)"/>
        <path d="M974 375C985 400 995 415 1004 430" fill="none" stroke="#484c55" stroke-width="12" opacity=".6" filter="url(#b5)"/>
        <path d="M1019 332C1022 375 1050 430 1050 470V490C1058 440 1047 400 1026 332Z" fill="#838c99" opacity=".5" filter="url(#b2)"/>
        <path d="M942 450C960 450 970 475 990 478C1015 484 1030 494 1041 497C1035 525 1015 545 998 568C970 568 940 574 915 575C900 570 890 560 898 535C906 515 910 500 912 478C920 475 925 450 942 450Z" fill="url(#shoulder)" filter="url(#b2)"/>
        <path d="M914 440Q932 455 920 486" fill="none" stroke="#413e45" stroke-width="12" opacity=".75" filter="url(#b5)"/>
        <path d="M972 466C1000 472 1030 472 1049 470L1046 490C1030 492 1000 480 972 473Z" fill="#4f4e57" opacity=".8" filter="url(#b2)"/>
        <path d="M1042 498C1032 527 1018 542 998 568C986 574 960 569 912 573" fill="none" stroke="#c9d5ea" stroke-width="5" opacity=".8" filter="url(#b2)"/>
        <ellipse cx="1006" cy="477" rx="6" ry="4" fill="#c8c9d4" filter="url(#b2)"/><ellipse cx="1030" cy="482" rx="5" ry="5" fill="#bfc3d0" filter="url(#b2)"/>
        <path d="M920 580L988 576V620H928Z" fill="#5d5f6a" opacity=".8" filter="url(#b5)"/>
        <path d="M903 555C894 580 893 600 893 640H906C906 620 905 595 914 570Z" fill="#b9c4d9" opacity=".9" mask="url(#nm)" filter="url(#b2)"/>
        <ellipse cx="936" cy="597" rx="6" ry="12" fill="#d0dcef" filter="url(#b2)"/><path d="M974 583Q962 595 960 612" fill="none" stroke="#c0cce0" stroke-width="9" opacity=".85" filter="url(#b2)"/>
        <g mask="url(#nm)">
          <path d="M1088 318H1128C1128 365 1108 410 1109 468C1114 500 1140 535 1138 650H1082C1081 600 1087 530 1087 460Z" fill="#756579" filter="url(#b1)"/>
          <path d="M1101 320C1101 370 1097 430 1100 478C1102 520 1105 570 1105 650" fill="none" stroke="#4c4452" stroke-width="9" filter="url(#b2)"/>
          <path d="M1095 320C1096 370 1094 430 1096 478C1097 520 1097 570 1097 650" fill="none" stroke="#8e7c90" stroke-width="2" filter="url(#b1)"/>
          <path d="M1114 320C1115 370 1105 430 1106 478C1112 520 1123 570 1123 650" fill="none" stroke="#8e7b97" stroke-width="6" filter="url(#b2)"/>
        </g>
        <path d="M1127 315C1127 360 1109 410 1109 465C1109 485 1138 525 1138 610" fill="none" stroke="#332f38" stroke-width="5" opacity=".65" filter="url(#b1)"/>
        <path d="M869 903C900 939 1100 942 1136 901V940H869Z" fill="#3e393d" filter="url(#b1)"/>
        <path d="M882 914C910 928 960 930 990 930" stroke="#a1a1a9" stroke-width="2" fill="none" opacity=".6" filter="url(#b1)"/>
        <g clip-path="url(#conec)">
          <path d="M880 190h260v140H880z" fill="url(#cone)"/>
          <path d="M989 196L889 300V318H902Z" fill="#fafbff" opacity=".8" filter="url(#b2)"/>
          <path d="M1000 200L982 325H1002Z" fill="#fff" filter="url(#b2)"/>
          <path d="M1026 200L1100 326H1130L1035 200Z" fill="#fff" filter="url(#b2)"/>
          <path d="M1035 198L1122 302L1128 320" fill="none" stroke="#776b7a" stroke-width="5" filter="url(#b1)"/>
          <path d="M985 201H1034" stroke="#fff" stroke-width="4" filter="url(#b1)"/>
          <path d="M903 314Q955 322 1008 326T1105 323" fill="none" stroke="#8d95a5" stroke-width="6" filter="url(#b2)"/>
        </g>
        <path d="M925 316Q975 326 1018 328" fill="none" stroke="#dfe8f6" stroke-width="4" filter="url(#b1)"/>
        <path d="M950 329C990 334 1040 336 1092 328" fill="none" stroke="#535862" stroke-width="5" opacity=".6" filter="url(#b2)"/>
      </g>
      <path d="M985 198L896 294Q890 300 891 315C891 345 905 390 905 445C905 472 898 485 890 505C879 530 873 560 872 600L869 770V906" fill="none" stroke="#968d86" stroke-width="1" opacity=".7"/>
      <ellipse cx="1010" cy="197" rx="21" ry="3" fill="#1b191d"/>
      <g stroke="#0000f5" fill="#0000f5"><path d="M1002 917V889M1002 916h8M998 912l7 7M1005 912l-7 7M997 916h6"/><path d="M1002 884l-2 8h4zM1012 917l-6-2v4z"/></g>
    </svg>

    <svg class="triad" viewBox="0 0 56 52" role="img" aria-label="坐标轴">
      <path d="M30 40V18" stroke="#2b8a30" stroke-width="4"/><path d="M26 21l4-11 4 11z" fill="#1d6d21"/>
      <path d="M30 40L15 42" stroke="#1b1ba8" stroke-width="4"/><path d="M7 42l10-5v9z" fill="#2020c8"/>
      <path d="M30 40l12 2" stroke="#8e1717" stroke-width="4"/><path d="M50 44l-9-6-1 9z" fill="#c81818"/>
      <g font-family="Liberation Serif, serif" font-size="11"><text x="26" y="8" fill="#0b800b">Y</text><text x="0" y="47" fill="#00e">Z</text><text x="45" y="48" fill="#e00">X</text></g>
    </svg>

    <div class="headsup">
      <button class="tool" aria-label="正视于"><svg><use href="#normal"/></svg></button>
      <button class="tool" aria-label="整屏显示全图"><svg><use href="#zoomfit"/></svg></button>
      <button class="tool" aria-label="局部放大"><svg><use href="#zoomarea"/></svg></button>
      <button class="tool" aria-label="上一视图"><svg><use href="#prev"/></svg></button>
      <button class="tool" aria-label="剖面视图"><svg><use href="#section"/></svg></button>
      <button class="tool" aria-label="动态注解视图"><svg viewBox="0 0 20 20"><use href="#dynview" width="20" height="20"/><text class="serif-a" x="10" y="19" font-size="13">A</text></svg></button>
      <button class="tool" aria-label="等轴测"><svg><use href="#cube"/></svg></button>
      <button class="tool" aria-label="视图定向"><svg><use href="#orient"/></svg></button><button class="drop" aria-label="定向选项"></button>
      <button class="tool" aria-label="显示样式"><svg><use href="#display"/></svg></button><button class="drop" aria-label="样式选项"></button>
      <button class="tool" aria-label="隐藏/显示项目"><svg><use href="#eye"/></svg></button><button class="drop" aria-label="显示选项"></button>
      <button class="tool" aria-label="编辑外观"><svg><use href="#ballpen"/></svg></button>
      <button class="tool" aria-label="应用布景"><svg><use href="#scene"/></svg></button><button class="drop" aria-label="布景选项"></button>
      <button class="tool" aria-label="视图设置"><svg><use href="#monitor"/></svg></button><button class="drop" aria-label="设置选项"></button>
    </div>
    <div class="doc-tools">
      <button class="tool" aria-label="左窗格"><svg><use href="#paneL"/></svg></button>
      <button class="tool" aria-label="右窗格"><svg><use href="#paneR"/></svg></button>
      <button class="tool" aria-label="最小化文档"><svg><use href="#min"/></svg></button>
      <button class="tool" aria-label="还原文档"><svg><use href="#restore"/></svg></button>
      <button class="tool" aria-label="关闭文档"><svg><use href="#close"/></svg></button>
    </div>
    <nav class="task" aria-label="任务窗格">
      <button aria-label="资源"><svg><use href="#home"/></svg></button>
      <button aria-label="设计库"><svg><use href="#books"/></svg></button>
      <button aria-label="文件探索器"><svg><use href="#folder2"/></svg></button>
      <button aria-label="视图调色板"><svg><use href="#palette"/></svg></button>
      <button class="active" aria-label="外观、布景"><svg><use href="#ball"/></svg></button>
      <button aria-label="自定义属性"><svg><use href="#props"/></svg></button>
    </nav>
    <div class="meter"><i></i></div>
    <button class="collapse" aria-label="折叠面板"><i></i></button>
  </section>
</main>

<nav class="sheets" aria-label="模型页">
  <div class="pager">
    <button aria-label="第一页"><svg viewBox="0 0 15 14"><path d="M4 3v8M11 3v8L6 7z"/></svg></button>
    <button aria-label="上一页"><svg viewBox="0 0 15 14"><path d="M10 3v8L5 7z"/></svg></button>
    <button aria-label="下一页"><svg viewBox="0 0 15 14"><path d="M5 3v8l5-4z"/></svg></button>
    <button aria-label="最后一页"><svg viewBox="0 0 15 14"><path d="M11 3v8M4 3v8l5-4z"/></svg></button>
  </div>
  <button class="sheet active">模型</button><button class="sheet">3D 视图</button><button class="sheet">运动算例 1</button>
</nav>
<footer class="status">
  <span>SOLIDWORKS Premium 2019 SP5.0</span>
  <span class="gap"></span>
  <span class="mode">在编辑 零件</span>
  <span class="gap2"></span>
  <button class="units">MMGS<i></i></button>
  <svg class="tagicon" aria-hidden="true"><use href="#tag"/></svg>
</footer>
</body>
</html>
```

FILE: styles.css
```css
* { box-sizing: border-box; }
body {
  margin: 0;
  height: 100vh;
  display: flex;
  flex-direction: column;
  overflow: hidden;
  background: #f7f7f7;
  color: #000;
  font: 12px/13px "Noto Sans", "Noto Sans CJK SC", sans-serif;
}
button { margin: 0; padding: 0; border: 0; background: none; color: inherit; font: inherit; }
input { min-width: 0; padding: 0; border: 0; background: none; font: inherit; }
.sprite { position: absolute; width: 0; height: 0; }
.serif-a { font-family: "Liberation Serif", serif; font-weight: 700; fill: #2f7ba6; }

/* shared toolbar pieces */
.tool { display: grid; place-items: center; width: 26px; height: 24px; flex: none; }
.tool svg { width: 20px; height: 20px; }
.drop { width: 13px; height: 24px; flex: none; display: grid; place-items: center; }
.drop::before, .has-drop::after {
  content: ""; width: 0; height: 0;
  border: 3px solid transparent; border-top-color: #333; border-bottom: 0;
}

/* title bar */
.titlebar { display: flex; align-items: center; height: 31px; padding-top: 1px; border-bottom: 1px solid #808080; flex: none; }
.brand {
  position: relative; z-index: 2; align-self: flex-start;
  display: flex; align-items: center; gap: 3px;
  width: 145px; height: 34px; margin-left: 10px; padding-left: 5px; flex: none;
  border: 1px solid #999; border-top: 0;
  background: linear-gradient(160deg, #fff 45%, #d8d8d8);
  color: #da2b1f;
}
.brand-mark { width: 30px; height: 30px; flex: none; }
.brand-name { font: italic 15px/16px "Liberation Sans", sans-serif; padding-top: 4px; white-space: nowrap; }
.brand-more { width: 21px; height: 30px; border-right: 1px solid #999; display: grid; place-items: center; flex: none; }
.brand-more::before { content: ""; border: 6px solid transparent; border-left: 7px solid #333; border-right: 0; }
.quick { display: flex; align-items: center; margin-left: 30px; flex: none; }
.quick .tool { width: 25px; }
.quick .wide { width: 26px; }
.quick .drop { width: 14px; }
.quick .picked { background: #b0b0b0; border: 1px solid #777; height: 26px; }
.quick .framed { border: 1px solid #999; border-left: 0; height: 26px; }
.doc-title { flex: 1; margin: 0; font: inherit; text-align: center; white-space: nowrap; }
.search {
  display: flex; align-items: center; width: 202px; height: 23px; margin: 0; padding-left: 5px; flex: none;
  border: 1px solid #111; background: #eeeff4;
}
.search > svg { width: 15px; height: 15px; flex: none; }
.search input { flex: 1; margin-left: 6px; }
.search input::placeholder { color: #666; opacity: 1; }
.search .drop, .search .tool { height: 20px; }
.search .tool svg { width: 18px; height: 18px; }
.window-tools { display: flex; align-items: center; padding-left: 3px; color: #333; }
.window-tools .help { font-size: 19px; font-weight: 700; }

/* ribbon */
.ribbon { display: flex; height: 87px; padding: 6px 0 2px; border-bottom: 1px solid #808080; flex: none; }
.group { display: grid; border-right: 1px solid #c4c4c4; }
.group:last-child { border: 0; }
.g-boss { grid-template-columns: 50px 50px 115px; padding-left: 6px; }
.g-cut { grid-template-columns: 46px 46px 46px 87px; padding-left: 1px; }
.g-feat { grid-template-columns: 36px 45px 62px 63px; }
.g-ref { grid-template-columns: 42px 38px; padding-left: 3px; }
.g-body { grid-template-columns: 34px 34px 50px 52px 36px; }
.g-view { grid-template-columns: 35px 57px 60px; }
.big { display: flex; flex-direction: column; align-items: center; gap: 1px; padding-top: 12px; white-space: nowrap; }
.big svg { width: 20px; height: 20px; flex: none; }
.big:disabled { color: #aaa; }
.big.has-drop { padding: 4px 0 9px; }
.has-drop::after { margin-top: auto; }
.big.on { background: #b0b0b0; border: 1px solid #666; padding-top: 11px; }
.big.on + .on { border-left-width: 2px; }
.stack { display: grid; grid-template-rows: repeat(3, 26px); }
.small { display: flex; align-items: center; gap: 6px; padding-left: 2px; white-space: nowrap; }
.small svg { width: 20px; height: 20px; flex: none; }

/* working area: command tabs run over the top of the panel and the canvas */
.work { flex: 1; min-height: 0; display: grid; grid-template: 22px 1fr / 243px 1fr; }
.tabs { grid-area: 1 / 1 / 2 / 3; justify-self: start; z-index: 2; display: flex; }
.tabs button {
  width: 56px; background: #d4d4d4; white-space: nowrap;
  border-right: 1px solid #808080; border-bottom: 1px solid #808080;
}
.tabs .active { background: #f7f7f7; color: #444; }
.tabs .w64 { width: 64px; }
.tabs .w115 { width: 115px; }

/* feature manager panel */
.panel {
  grid-area: 2 / 1 / 3 / 2; min-width: 0; min-height: 0; overflow: hidden;
  display: flex; flex-direction: column;
  border-left: 1px solid #b8b8b8; border-right: 1px solid #808080; padding-right: 2px;
}
.grip { height: 16px; margin: 4px 0; border: solid #c4c4c4; border-width: 1px 0; display: grid; place-items: center; flex: none; }
.grip i, .collapse i { width: 6px; height: 6px; border: 1px solid #999; border-radius: 50%; background: #ddd; }
.panel-tabs { display: flex; height: 26px; padding-left: 1px; border-bottom: 1px solid #b8b8b8; flex: none; }
.panel-tabs button {
  width: 40px; height: 26px; display: grid; place-items: center;
  background: #d4d4d4; border: 1px solid #808080; border-left: 0;
}
.panel-tabs svg { width: 20px; height: 20px; }
.panel-tabs .active { background: #f7f7f7; border-bottom-color: #f7f7f7; }
.panel-tabs .next { width: 20px; margin-left: auto; background: none; border: 0; }
.panel-tabs .next svg { width: 10px; height: 14px; }
.filter { display: flex; align-items: center; height: 26px; margin: 0 3px 0 4px; padding-left: 1px; border: 1px solid #c4c4c4; flex: none; }
.filter svg { width: 20px; height: 20px; flex: none; }
.filter input { flex: 1; }
.root { display: flex; align-items: center; gap: 4px; height: 22px; padding-left: 4px; white-space: nowrap; overflow: hidden; flex: none; }
.root svg, .tree svg { width: 18px; height: 18px; flex: none; }
.tree { list-style: none; margin: 0; padding: 0; flex: none; }
.tree li { display: flex; align-items: center; gap: 6px; height: 22px; padding-left: 25px; white-space: nowrap; }
.tree .exp { padding-left: 9px; }
.tree .exp::before {
  content: ""; margin-right: 6px;
  border: 4px solid transparent; border-left-color: #555; border-right: 0;
}
.rollback { height: 4px; background: #3a8dc4; flex: none; }
.hscroll { display: flex; align-items: center; height: 16px; margin-top: auto; padding: 0 5px; background: #ececec; flex: none; }
.hscroll > i { border: 4px solid transparent; }
.hscroll .left { border-right-color: #333; border-left: 0; }
.hscroll .right { border-left-color: #333; border-right: 0; }
.track { flex: 1; padding: 0 9px; }
.thumb {
  width: 80%; height: 15px; display: flex; align-items: center; justify-content: center; gap: 2px;
  border: 1px solid #999; border-radius: 1px; background: linear-gradient(#f4f4f4 45%, #d0d0d6 50%, #dcdcdc);
}
.thumb i { width: 1px; height: 7px; background: #555; }
.grip-low { height: 3px; margin: 2px 0 1px; border: solid #c4c4c4; border-width: 1px 0; flex: none; }

/* graphics canvas */
.viewport { grid-area: 1 / 2 / 3 / 3; position: relative; min-width: 0; overflow: hidden; background: #fff; }
.model { position: absolute; left: 37%; bottom: 0; width: 290px; height: 818px; }
.triad { position: absolute; left: 10px; bottom: 46px; width: 56px; height: 52px; }
.headsup { position: absolute; top: 3px; left: 0; right: 4px; display: flex; justify-content: center; opacity: .88; }
.headsup .drop { width: 14px; }
.headsup .drop::before { border-top-color: #777; }
.doc-tools { position: absolute; top: 3px; right: 6px; display: flex; color: #999; }
.task { position: absolute; top: 50px; right: 0; display: grid; grid-auto-rows: 24px; border: solid #808080; border-width: 1px 0 0 1px; }
.task button { width: 24px; display: grid; place-items: center; background: #d4d4d4; border-bottom: 1px solid #808080; }
.task .active { background: #f7f7f7; }
.task svg { width: 20px; height: 20px; }
.meter { position: absolute; top: 261px; right: 1px; width: 8px; height: 57px; padding: 28px 1px 2px; border-radius: 4px; background: #666; }
.meter i { display: block; height: 100%; background: repeating-linear-gradient(#4dbd6f 0 1px, #666 1px 2px); }
.collapse {
  position: absolute; top: 424px; left: 0; width: 8px; height: 39px;
  display: grid; place-items: center; background: #f7f7f7; border: 1px solid #808080; border-left: 0;
}

/* sheets and status */
.sheets { display: flex; height: 15px; padding-left: 2px; border-top: 1px solid #808080; flex: none; }
.pager { display: flex; gap: 1px; padding-right: 1px; background: #666; }
.pager button { width: 15px; height: 14px; background: #b4b4b4; border: 1px solid #8c8c8c; }
.pager svg { display: block; width: 13px; height: 12px; fill: #8a8a8a; stroke: #8a8a8a; }
.sheet { width: 57px; background: #d4d4d4; border-right: 1px solid #808080; white-space: nowrap; }
.sheet:last-child { width: 80px; padding-right: 10px; }
.sheet.active { width: 46px; background: #f7f7f7; }
.status {
  display: flex; align-items: center; height: 20px; padding: 2px 2px 0 1px; flex: none;
  border-top: 1px solid #808080; border-bottom: 2px solid #1c2a38;
}
.gap, .gap2 { align-self: stretch; border: solid #c8c8c8; border-width: 0 1px; }
.gap { width: 9px; margin-left: auto; }
.mode { padding: 0 6px 0 3px; }
.gap2 { width: 17px; }
.units { display: flex; align-items: center; gap: 16px; padding: 0 66px 0 28px; }
.units i { border: 3px solid transparent; border-bottom-color: #333; border-top: 0; }
.tagicon { width: 17px; height: 17px; }
```
